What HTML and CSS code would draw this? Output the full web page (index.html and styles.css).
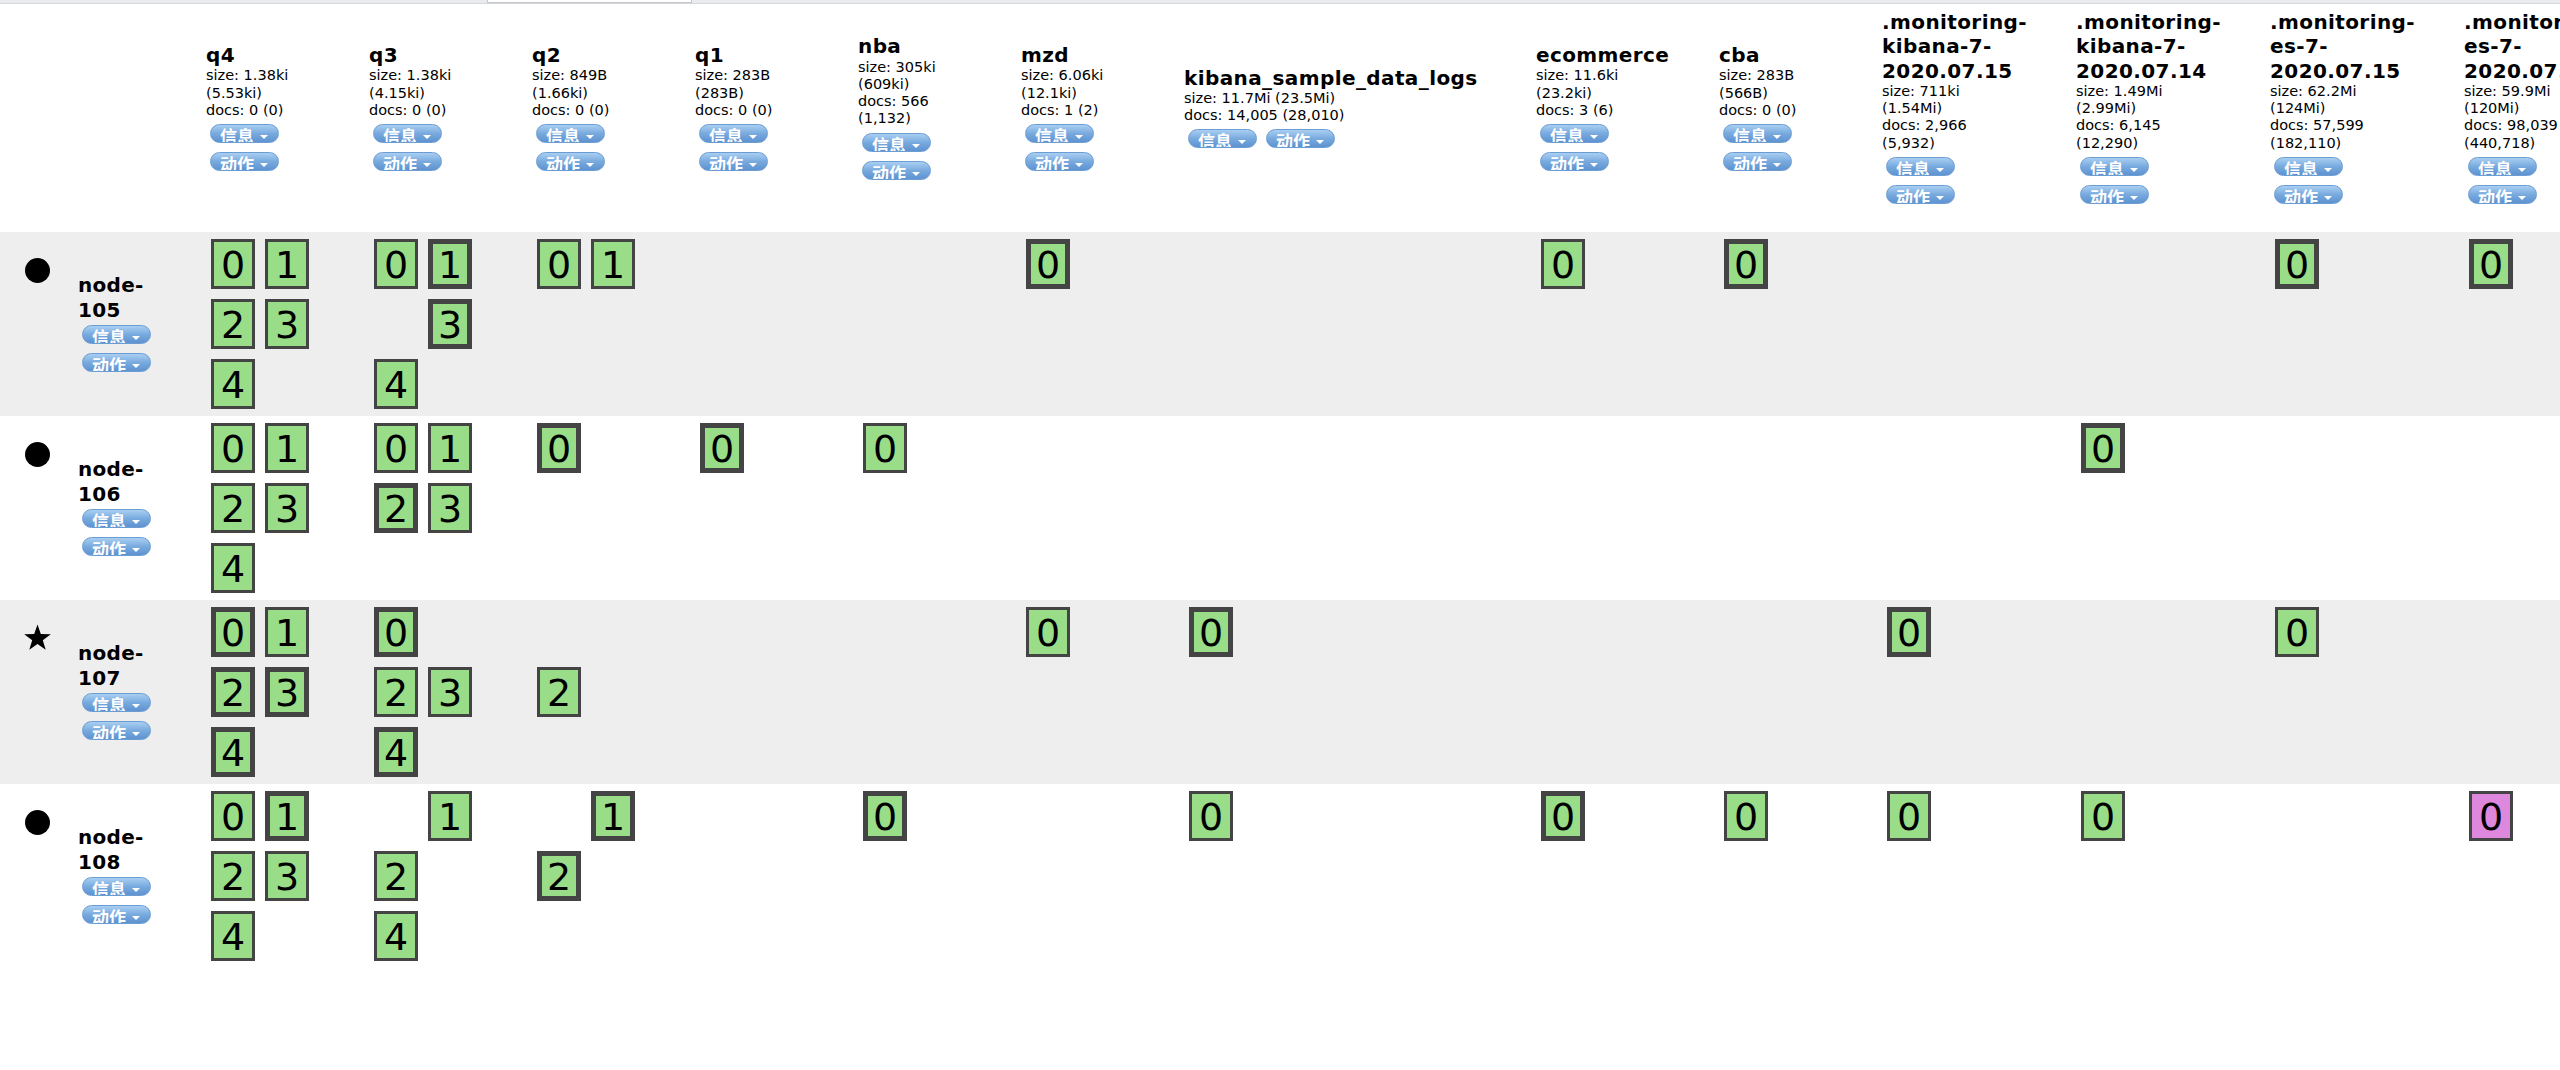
FILE: index.html
```html
<!DOCTYPE html>
<html lang="zh">
<head>
<meta charset="utf-8">
<title>Overview</title>
<link rel="stylesheet" href="styles.css">
</head>
<body>
<div class="topbar"><div class="topbar-field"></div></div>
<div class="overview">
  <div class="ov-row ov-head">
    <div class="cell cell-node"></div>
    <div class="idx">
      <h3 class="idx-name">q4</h3>
      <div class="idx-stat">size: 1.38ki<br>(5.53ki)<br>docs: 0 (0)</div>
      <div class="btns"><span class="btn">信息</span><span class="btn">动作</span></div>
    </div>
    <div class="idx">
      <h3 class="idx-name">q3</h3>
      <div class="idx-stat">size: 1.38ki<br>(4.15ki)<br>docs: 0 (0)</div>
      <div class="btns"><span class="btn">信息</span><span class="btn">动作</span></div>
    </div>
    <div class="idx">
      <h3 class="idx-name">q2</h3>
      <div class="idx-stat">size: 849B<br>(1.66ki)<br>docs: 0 (0)</div>
      <div class="btns"><span class="btn">信息</span><span class="btn">动作</span></div>
    </div>
    <div class="idx">
      <h3 class="idx-name">q1</h3>
      <div class="idx-stat">size: 283B<br>(283B)<br>docs: 0 (0)</div>
      <div class="btns"><span class="btn">信息</span><span class="btn">动作</span></div>
    </div>
    <div class="idx">
      <h3 class="idx-name">nba</h3>
      <div class="idx-stat">size: 305ki<br>(609ki)<br>docs: 566<br>(1,132)</div>
      <div class="btns"><span class="btn">信息</span><span class="btn">动作</span></div>
    </div>
    <div class="idx">
      <h3 class="idx-name">mzd</h3>
      <div class="idx-stat">size: 6.06ki<br>(12.1ki)<br>docs: 1 (2)</div>
      <div class="btns"><span class="btn">信息</span><span class="btn">动作</span></div>
    </div>
    <div class="idx">
      <h3 class="idx-name">kibana_sample_data_logs</h3>
      <div class="idx-stat">size: 11.7Mi (23.5Mi)<br>docs: 14,005 (28,010)</div>
      <div class="btns"><span class="btn">信息</span><span class="btn">动作</span></div>
    </div>
    <div class="idx">
      <h3 class="idx-name">ecommerce</h3>
      <div class="idx-stat">size: 11.6ki<br>(23.2ki)<br>docs: 3 (6)</div>
      <div class="btns"><span class="btn">信息</span><span class="btn">动作</span></div>
    </div>
    <div class="idx">
      <h3 class="idx-name">cba</h3>
      <div class="idx-stat">size: 283B<br>(566B)<br>docs: 0 (0)</div>
      <div class="btns"><span class="btn">信息</span><span class="btn">动作</span></div>
    </div>
    <div class="idx">
      <h3 class="idx-name">.monitoring-<br>kibana-7-<br>2020.07.15</h3>
      <div class="idx-stat">size: 711ki<br>(1.54Mi)<br>docs: 2,966<br>(5,932)</div>
      <div class="btns"><span class="btn">信息</span><span class="btn">动作</span></div>
    </div>
    <div class="idx">
      <h3 class="idx-name">.monitoring-<br>kibana-7-<br>2020.07.14</h3>
      <div class="idx-stat">size: 1.49Mi<br>(2.99Mi)<br>docs: 6,145<br>(12,290)</div>
      <div class="btns"><span class="btn">信息</span><span class="btn">动作</span></div>
    </div>
    <div class="idx">
      <h3 class="idx-name">.monitoring-<br>es-7-<br>2020.07.15</h3>
      <div class="idx-stat">size: 62.2Mi<br>(124Mi)<br>docs: 57,599<br>(182,110)</div>
      <div class="btns"><span class="btn">信息</span><span class="btn">动作</span></div>
    </div>
    <div class="idx">
      <h3 class="idx-name">.monitoring-<br>es-7-<br>2020.07.14</h3>
      <div class="idx-stat">size: 59.9Mi<br>(120Mi)<br>docs: 98,039<br>(440,718)</div>
      <div class="btns"><span class="btn">信息</span><span class="btn">动作</span></div>
    </div>
  </div>

  <!-- node-105 -->
  <div class="ov-row node odd">
    <div class="cell-node">
      <svg class="node-icon" viewBox="0 0 28 28"><circle cx="13.5" cy="14.5" r="12.5"/></svg>
      <div class="node-info">
        <h3 class="node-name">node-<br>105</h3>
        <div class="btns"><span class="btn">信息</span><span class="btn">动作</span></div>
      </div>
    </div>
    <div class="routing"><div class="shards"><span class="shard">0</span><span class="shard">1</span><span class="shard">2</span><span class="shard">3</span><span class="shard">4</span></div></div>
    <div class="routing"><div class="shards"><span class="shard">0</span><span class="shard primary">1</span><span class="shard null"></span><span class="shard primary">3</span><span class="shard">4</span></div></div>
    <div class="routing"><div class="shards"><span class="shard">0</span><span class="shard">1</span></div></div>
    <div class="routing"></div>
    <div class="routing"></div>
    <div class="routing"><div class="shards"><span class="shard primary">0</span></div></div>
    <div class="routing"></div>
    <div class="routing"><div class="shards"><span class="shard">0</span></div></div>
    <div class="routing"><div class="shards"><span class="shard primary">0</span></div></div>
    <div class="routing"></div>
    <div class="routing"></div>
    <div class="routing"><div class="shards"><span class="shard primary">0</span></div></div>
    <div class="routing"><div class="shards"><span class="shard primary">0</span></div></div>
  </div>

  <!-- node-106 -->
  <div class="ov-row node">
    <div class="cell-node">
      <svg class="node-icon" viewBox="0 0 28 28"><circle cx="13.5" cy="14.5" r="12.5"/></svg>
      <div class="node-info">
        <h3 class="node-name">node-<br>106</h3>
        <div class="btns"><span class="btn">信息</span><span class="btn">动作</span></div>
      </div>
    </div>
    <div class="routing"><div class="shards"><span class="shard">0</span><span class="shard">1</span><span class="shard">2</span><span class="shard">3</span><span class="shard">4</span></div></div>
    <div class="routing"><div class="shards"><span class="shard">0</span><span class="shard">1</span><span class="shard primary">2</span><span class="shard">3</span></div></div>
    <div class="routing"><div class="shards"><span class="shard primary">0</span></div></div>
    <div class="routing"><div class="shards"><span class="shard primary">0</span></div></div>
    <div class="routing"><div class="shards"><span class="shard">0</span></div></div>
    <div class="routing"></div>
    <div class="routing"></div>
    <div class="routing"></div>
    <div class="routing"></div>
    <div class="routing"></div>
    <div class="routing"><div class="shards"><span class="shard primary">0</span></div></div>
    <div class="routing"></div>
    <div class="routing"></div>
  </div>

  <!-- node-107 (master) -->
  <div class="ov-row node odd">
    <div class="cell-node">
      <svg class="node-icon" viewBox="0 0 28 28"><polygon points="13.5,0.5 16.8,10 26.8,10.2 18.8,16.2 21.7,25.8 13.5,20.1 5.3,25.8 8.2,16.2 0.2,10.2 10.2,10"/></svg>
      <div class="node-info">
        <h3 class="node-name">node-<br>107</h3>
        <div class="btns"><span class="btn">信息</span><span class="btn">动作</span></div>
      </div>
    </div>
    <div class="routing"><div class="shards"><span class="shard primary">0</span><span class="shard">1</span><span class="shard primary">2</span><span class="shard primary">3</span><span class="shard primary">4</span></div></div>
    <div class="routing"><div class="shards"><span class="shard primary">0</span><span class="shard null"></span><span class="shard">2</span><span class="shard">3</span><span class="shard primary">4</span></div></div>
    <div class="routing"><div class="shards"><span class="shard null"></span><span class="shard null"></span><span class="shard">2</span></div></div>
    <div class="routing"></div>
    <div class="routing"></div>
    <div class="routing"><div class="shards"><span class="shard">0</span></div></div>
    <div class="routing"><div class="shards"><span class="shard primary">0</span></div></div>
    <div class="routing"></div>
    <div class="routing"></div>
    <div class="routing"><div class="shards"><span class="shard primary">0</span></div></div>
    <div class="routing"></div>
    <div class="routing"><div class="shards"><span class="shard">0</span></div></div>
    <div class="routing"></div>
  </div>

  <!-- node-108 -->
  <div class="ov-row node">
    <div class="cell-node">
      <svg class="node-icon" viewBox="0 0 28 28"><circle cx="13.5" cy="14.5" r="12.5"/></svg>
      <div class="node-info">
        <h3 class="node-name">node-<br>108</h3>
        <div class="btns"><span class="btn">信息</span><span class="btn">动作</span></div>
      </div>
    </div>
    <div class="routing"><div class="shards"><span class="shard">0</span><span class="shard primary">1</span><span class="shard">2</span><span class="shard">3</span><span class="shard">4</span></div></div>
    <div class="routing"><div class="shards"><span class="shard null"></span><span class="shard">1</span><span class="shard">2</span><span class="shard null"></span><span class="shard">4</span></div></div>
    <div class="routing"><div class="shards"><span class="shard null"></span><span class="shard primary">1</span><span class="shard primary">2</span></div></div>
    <div class="routing"></div>
    <div class="routing"><div class="shards"><span class="shard primary">0</span></div></div>
    <div class="routing"></div>
    <div class="routing"><div class="shards"><span class="shard">0</span></div></div>
    <div class="routing"><div class="shards"><span class="shard primary">0</span></div></div>
    <div class="routing"><div class="shards"><span class="shard">0</span></div></div>
    <div class="routing"><div class="shards"><span class="shard">0</span></div></div>
    <div class="routing"><div class="shards"><span class="shard">0</span></div></div>
    <div class="routing"></div>
    <div class="routing"><div class="shards"><span class="shard relocating">0</span></div></div>
  </div>
</div>
</body>
</html>
```

FILE: styles.css
```css
html, body {
  margin: 0;
  padding: 0;
  overflow: hidden;
  background: #fff;
}

body {
  width: 2560px;
  height: 1070px;
  font-family: "DejaVu Sans", Verdana, sans-serif;
  color: #000;
}

/* strip left over from the app header above */
.topbar {
  height: 3px;
  background: #e9ebee;
  border-bottom: 1px solid #d6d8db;
  display: flex;
}

.topbar-field {
  margin-left: 487px;
  width: 203px;
  height: 2px;
  background: #fff;
  border: 1px solid #c4c7ca;
  border-top: 0;
}

.overview {
  width: 2658px;
}

.ov-row {
  display: grid;
  grid-template-columns: 206px repeat(6, 163px) 352px 183px 163px repeat(4, 194px);
}

/* ---------- index header ---------- */
.ov-head {
  height: 206px;
  align-items: center;
  margin-bottom: 22px;
}

.idx {
  padding-right: 55px;
  min-width: 0;
}

.idx-name {
  margin: 0;
  font-size: 20px;
  line-height: 24.3px;
  font-weight: bold;
  letter-spacing: 0.4px;
  white-space: nowrap;
}

.idx-stat {
  font-size: 14.5px;
  line-height: 17.3px;
  white-space: nowrap;
}

/* ---------- menu buttons ---------- */
.btns {
  display: flex;
  flex-wrap: wrap;
  gap: 9px;
  padding-left: 4px;
  margin-top: 5px;
}

.btn {
  display: flex;
  align-items: flex-start;
  width: 69px;
  height: 19px;
  box-sizing: border-box;
  padding: 2px 0 0 9px;
  border: 1px solid #6b9dd3;
  border-radius: 10px;
  background: linear-gradient(#a9cff2, #79aade 50%, #5e93d1);
  overflow: hidden;
  color: #fff;
  font-family: "Noto Sans CJK SC", "DejaVu Sans", sans-serif;
  font-weight: bold;
  font-size: 17px;
  line-height: 17px;
  white-space: nowrap;
}

.btn::after {
  content: "";
  flex: none;
  width: 0;
  height: 0;
  margin: 8px 0 0 6px;
  border-left: 4px solid transparent;
  border-right: 4px solid transparent;
  border-top: 4px solid #fff;
}

/* ---------- node rows ---------- */
.node {
  height: 184px;
}

.node.odd {
  background: #eee;
}

.cell-node {
  display: flex;
  padding-left: 24px;
}

.node-icon {
  flex: none;
  width: 28px;
  height: 28px;
  margin-top: 24px;
  fill: #000;
}

.node-info {
  align-self: center;
  margin-left: 26px;
  margin-top: -3px;
}

.node-name {
  margin: 0;
  font-size: 20px;
  line-height: 24.3px;
  font-weight: bold;
  letter-spacing: 0.3px;
  white-space: nowrap;
}

.node-info .btns {
  margin-top: 3px;
  flex-direction: column;
}

/* ---------- shards ---------- */
.routing {
  padding: 7px 55px 0 5px;
}

.shards {
  display: grid;
  grid-template-columns: repeat(2, 44px);
  grid-auto-rows: 50px;
  gap: 10px;
}

.shard {
  box-sizing: border-box;
  display: flex;
  align-items: center;
  justify-content: center;
  padding-top: 2px;
  border: 3px solid #444;
  background: #99dd88;
  font-size: 38px;
  line-height: 1;
  color: #000;
}

.shard.primary {
  border-width: 5px;
}

.shard.relocating {
  background: #dd88dd;
}

.shard.null {
  border: 0;
  background: none;
}
```
